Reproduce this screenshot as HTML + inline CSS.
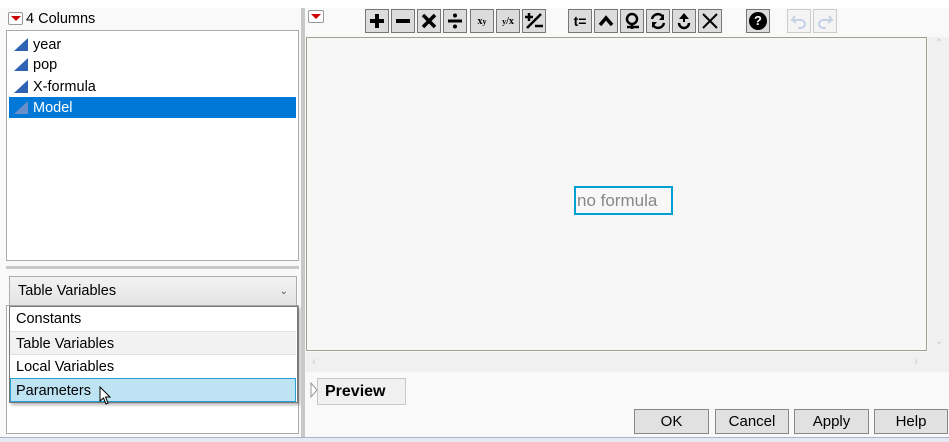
<!DOCTYPE html>
<html><head><meta charset="utf-8"><style>
*{box-sizing:border-box;margin:0;padding:0}
body{width:949px;height:442px;background:#f9f9f9;position:relative;overflow:hidden;font-family:"Liberation Sans",Arial,sans-serif;font-size:14px;color:#000}
.a{position:absolute}
.tb{position:absolute;top:9px;width:24px;height:24px;border:1px solid #777;background:#dcdcdc;display:flex;align-items:center;justify-content:center}
.btn{position:absolute;top:409px;height:25px;border:1px solid #888;background:#e1e1e1;display:flex;align-items:center;justify-content:center;font-size:15px}
.row{position:absolute;left:9px;width:287px;height:21px;line-height:22px;padding-left:24px;font-size:14.5px}
.ic{position:absolute;left:5px;top:4px;width:0;height:0;border-left:14px solid transparent;border-bottom:13px solid #2f64b5}
.it{position:absolute;left:10px;width:286px;height:24px;line-height:24px;padding-left:6px;font-size:14.5px}
</style></head><body>
<div class="a" style="left:0;top:0;width:949px;height:8px;background:#fff"></div>
<div class="a" style="left:8px;top:12px;width:15px;height:13px;border:1px solid #999;border-radius:2px;background:#fff"></div>
<div class="a" style="left:11px;top:16px;width:0;height:0;border-left:5px solid transparent;border-right:5px solid transparent;border-top:5px solid #c00"></div>
<div class="a" style="left:26px;top:11px;font-size:14.5px">4 Columns</div>
<div class="a" style="left:6px;top:30px;width:293px;height:231px;background:#fff;border:1px solid #aaa"></div>
<div class="row" style="top:34px"><div class="ic"></div>year</div>
<div class="row" style="top:54px"><div class="ic"></div>pop</div>
<div class="row" style="top:76px"><div class="ic"></div>X-formula</div>
<div class="row" style="top:97px;background:#0078d7;color:#fff"><div class="ic" style="border-bottom-color:#6a8fc8"></div>Model</div>
<div class="a" style="left:6px;top:266px;width:293px;height:3px;background:#c8c8c8"></div>
<div class="a" style="left:6px;top:305px;width:293px;height:129px;background:#fff;border:1px solid #aaa"></div>
<div class="a" style="left:9px;top:276px;width:288px;height:30px;border:1px solid #adadad;background:linear-gradient(#f2f2f2,#e4e4e4);padding-left:8px;line-height:29px;font-size:14.5px">Table Variables<span style="position:absolute;right:8px;top:0;font-size:10px;color:#555">&#8964;</span></div>
<div class="a" style="left:9px;top:306px;width:289px;height:97px;background:#fff;border:1px solid #777;box-shadow:2px 2px 3px rgba(0,0,0,.3)"></div>
<div class="it" style="top:307px">Constants</div>
<div class="it" style="top:331px;background:#f2f2f2;border-top:1px solid #e0e0e0;border-bottom:1px solid #e0e0e0">Table Variables</div>
<div class="it" style="top:355px">Local Variables</div>
<div class="it" style="top:378px;background:#bee4f4;border:1px solid #2a9fd6;left:10px;padding-left:5px">Parameters</div>
<svg class="a" style="left:99px;top:386px" width="14" height="20" viewBox="0 0 14 20"><path d="M1 1 L1 15 L4.5 12 L7 18 L9 17 L6.5 11 L11 11 Z" fill="#fff" stroke="#000" stroke-width="1"/></svg>
<div class="a" style="left:301px;top:8px;width:4px;height:430px;background:#c8c8c8"></div>
<div class="a" style="left:308px;top:10px;width:16px;height:13px;border:1px solid #999;border-radius:2px;background:#fff"></div>
<div class="a" style="left:311px;top:14px;width:0;height:0;border-left:5px solid transparent;border-right:5px solid transparent;border-top:5px solid #c00"></div>
<div class="tb" style="left:365px"><svg width="16" height="16"><path d="M8 1V15M1 8H15" stroke="#000" stroke-width="4"/></svg></div>
<div class="tb" style="left:391px"><svg width="16" height="16"><path d="M1 8H15" stroke="#000" stroke-width="4"/></svg></div>
<div class="tb" style="left:417px"><svg width="16" height="16"><path d="M2 2L14 14M14 2L2 14" stroke="#000" stroke-width="3.5"/></svg></div>
<div class="tb" style="left:443px"><svg width="16" height="16"><path d="M1 8H15" stroke="#000" stroke-width="3"/><circle cx="8" cy="2.5" r="2"/><circle cx="8" cy="13.5" r="2"/></svg></div>
<div class="tb" style="left:470px;font-size:10px;font-family:'Liberation Serif',serif;font-weight:bold">x<sup style="font-size:8px">y</sup></div>
<div class="tb" style="left:496px;font-size:10px;font-family:'Liberation Serif',serif;font-weight:bold"><sup style="font-size:8px">y</sup>/x</div>
<div class="tb" style="left:522px"><svg width="18" height="18"><path d="M4 1V9M0 5H8M2 16L16 2M10 14H18" stroke="#000" stroke-width="2.5"/></svg></div>
<div class="tb" style="left:568px;font-size:14px;font-weight:bold">t=</div>
<div class="tb" style="left:594px"><svg width="16" height="16"><path d="M2 12L8 5L14 12" stroke="#000" stroke-width="3.5" fill="none"/></svg></div>
<div class="tb" style="left:620px"><svg width="18" height="18"><circle cx="9" cy="7" r="5" stroke="#000" stroke-width="2.5" fill="none"/><path d="M9 12V17M4 15H16" stroke="#000" stroke-width="2.5"/></svg></div>
<div class="tb" style="left:646px"><svg width="18" height="18"><path d="M14 5A6 6 0 0 0 3 7M4 13A6 6 0 0 0 15 11" stroke="#000" stroke-width="2.5" fill="none"/><path d="M15 2V8H10Z M3 16V10H8Z"/></svg></div>
<div class="tb" style="left:672px"><svg width="18" height="18"><path d="M9 1L4 7H14Z"/><path d="M9 6V10" stroke="#000" stroke-width="2"/><path d="M4 11A5 5 0 1 0 14 11" stroke="#000" stroke-width="2.5" fill="none"/></svg></div>
<div class="tb" style="left:698px"><svg width="18" height="18"><path d="M2 2L16 16M16 2L2 16" stroke="#000" stroke-width="2"/></svg></div>
<div class="tb" style="left:746px"><div style="width:18px;height:18px;border-radius:50%;background:#000;color:#fff;font-size:13px;font-weight:bold;text-align:center;line-height:18px">?</div></div>
<div class="tb" style="left:787px;border-color:#ccc;background:#f4f4f4"><svg width="18" height="18"><path d="M5 4L2 8L6 11" stroke="#c5d3e5" stroke-width="2" fill="none"/><path d="M2 8H11A4 4 0 0 1 11 16H8" stroke="#c5d3e5" stroke-width="2" fill="none"/></svg></div>
<div class="tb" style="left:813px;border-color:#ccc;background:#f4f4f4"><svg width="18" height="18"><path d="M13 4L16 8L12 11" stroke="#c5d3e5" stroke-width="2" fill="none"/><path d="M16 8H7A4 4 0 0 0 7 16H10" stroke="#c5d3e5" stroke-width="2" fill="none"/></svg></div>
<div class="a" style="left:306px;top:37px;width:621px;height:314px;background:#f7f7f7;border:1px solid #a0a090"></div>
<div class="a" style="left:928px;top:37px;width:21px;height:316px;background:#f0f0f0"></div>
<div class="a" style="left:306px;top:352px;width:643px;height:20px;background:#f0f0f0"></div>
<div class="a" style="left:574px;top:186px;width:99px;height:29px;border:2px solid #00a0d2;color:#888;font-size:17px;line-height:26px;padding-left:1px">no formula</div>
<div class="a" style="left:312px;top:354px;color:#ccc;font-size:12px">&lsaquo;</div>
<div class="a" style="left:914px;top:354px;color:#ccc;font-size:12px">&rsaquo;</div>
<div class="a" style="left:935px;top:38px;color:#ccc;font-size:10px">&#8963;</div>
<div class="a" style="left:935px;top:336px;color:#ccc;font-size:10px">&#8964;</div>
<svg class="a" style="left:310px;top:382px" width="8" height="16"><path d="M1 1 L7 8 L1 15 Z" fill="#fff" stroke="#999"/></svg>
<div class="a" style="left:317px;top:378px;width:89px;height:27px;border:1px solid #c8c8c8;background:#f0f0f0;font-weight:bold;font-size:16px;line-height:25px;padding-left:7px">Preview</div>
<div class="btn" style="left:634px;width:75px">OK</div>
<div class="btn" style="left:715px;width:74px">Cancel</div>
<div class="btn" style="left:794px;width:75px">Apply</div>
<div class="btn" style="left:874px;width:74px">Help</div>
<div class="a" style="left:0;top:437px;width:949px;height:5px;background:#e6e9f2;border-top:1px solid #a8b4cc"></div>
</body></html>
